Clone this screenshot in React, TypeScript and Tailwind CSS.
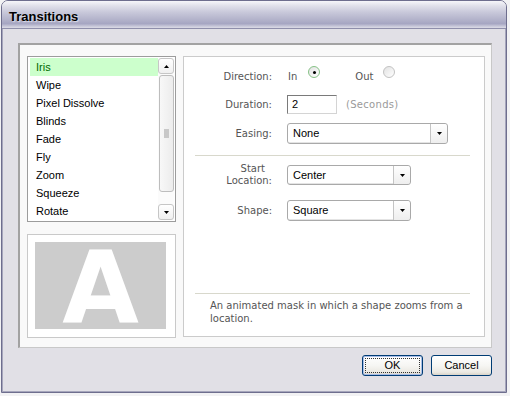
import React from 'react';

const items = ['Iris', 'Wipe', 'Pixel Dissolve', 'Blinds', 'Fade', 'Fly', 'Zoom', 'Squeeze', 'Rotate'];

function TriDown() {
  return (
    <svg width="5" height="3" viewBox="0 0 5 3">
      <path d="M0 0H5L2.5 3Z" fill="#000" />
    </svg>
  );
}
function TriUp() {
  return (
    <svg width="5" height="3" viewBox="0 0 5 3">
      <path d="M0 3H5L2.5 0Z" fill="#000" />
    </svg>
  );
}

function Select({ cls, value }: { cls: string; value: string }) {
  return (
    <div className={`flex rounded-[3px] border border-[#a9a9a9] bg-white shadow-[inset_-1px_-1px_0_#e4e4e4] ${cls}`}>
      <div className="flex flex-1 items-center pl-[5px] font-['Liberation_Sans',sans-serif] text-[11px] text-black">
        {value}
      </div>
      <div className="flex w-[17px] items-center justify-center rounded-r-[3px] border-l border-[#c4c4c4] bg-gradient-to-b from-white to-[#eeeeee]">
        <TriDown />
      </div>
    </div>
  );
}

function Radio({ checked }: { checked: boolean }) {
  return (
    <span
      className={`mb-[8px] flex h-[12px] w-[12px] items-center justify-center rounded-full border bg-gradient-to-br from-[#e2e2e2] to-white ${
        checked ? 'border-[#86c286]' : 'border-[#c2c2c2]'
      }`}
    >
      {checked && <span className="h-[3px] w-[3px] rounded-full bg-black" />}
    </span>
  );
}

export default function App() {
  const label = "font-['DejaVu_Sans',sans-serif] text-[10px] text-[#555555]";
  return (
    <div className="h-[396px] w-[510px] bg-[#f2f2f4] pl-[1px]">
      <div className="flex h-[393px] w-[506px] flex-col overflow-hidden rounded-t-[7px] border border-[#6e6e8e]">
        {/* Title bar */}
        <div className="flex h-[27px] items-center bg-[linear-gradient(to_bottom,#f6f6fa_0%,#e0e0ea_18%,#c8c8da_42%,#b2b2ca_70%,#a6a6c2_84%,#c6c6d8_93%,#dcdce6_100%)] pl-[7px] pt-[4px]">
          <span className="font-['Liberation_Sans',sans-serif] text-[13px] font-bold text-black [text-shadow:1px_1px_1px_rgba(255,255,255,0.6)]">
            Transitions
          </span>
        </div>
        {/* Body */}
        <div className="flex flex-1 flex-col border-t border-[#8f8fab] bg-[#e1e0e6] pl-[16px] pt-[14px] shadow-[inset_1px_0_0_#a6a6bc,inset_-1px_0_0_#a6a6bc,inset_0_-1px_0_#a6a6bc]">
          <div className="flex h-[305px] w-[474px] border-l-2 border-t-2 border-b border-r border-l-[#a2a2a2] border-t-[#a2a2a2] border-b-[#c8c8c8] border-r-[#c8c8c8] bg-[#f9f9f9] pl-[7px] pt-[11px]">
            {/* Left column */}
            <div className="flex w-[149px] flex-col">
              <div className="flex h-[166px] border border-[#9c9c9c] bg-white pl-[2px] pt-[1px]">
                <div className="flex w-[128px] flex-col">
                  {items.map((it, i) => (
                    <div
                      key={it}
                      className={`flex h-[18px] items-center pl-[6px] font-['Liberation_Sans',sans-serif] text-[11px] ${
                        i === 0 ? 'bg-[#ccffcc] text-[#006a00]' : 'text-black'
                      }`}
                    >
                      {it}
                    </div>
                  ))}
                </div>
                {/* Scrollbar */}
                <div className="flex h-[162px] w-[16px] flex-col bg-[#fbfbfb]">
                  <div className="flex h-[16px] w-[16px] items-center justify-center rounded-[3px] border border-[#c6c6c6] bg-gradient-to-b from-white to-[#f0f0f0]">
                    <TriUp />
                  </div>
                  <div className="ml-[1px] mt-[1px] flex h-[117px] w-[15px] items-center justify-center rounded-[3px] border border-[#bdbdbd] bg-gradient-to-r from-[#f8f8f8] to-[#ececec]">
                    <div className="h-[9px] w-[5px] bg-[#c8c8c8]" />
                  </div>
                  <div className="flex-1" />
                  <div className="flex h-[16px] w-[16px] items-center justify-center rounded-[3px] border border-[#c6c6c6] bg-gradient-to-b from-white to-[#f0f0f0]">
                    <TriDown />
                  </div>
                </div>
              </div>
              <div className="mt-[12px] h-[104px] border border-[#c9c9c9] bg-white pl-[7px] pt-[7px]">
                <div className="flex h-[87px] w-[131px] items-center justify-center bg-[#cccccc] pt-[3px]">
                  <span className="font-['DejaVu_Sans',sans-serif] text-[99px] font-bold leading-none text-white">A</span>
                </div>
              </div>
            </div>
            {/* Right box */}
            <div className="ml-[7px] flex h-[281px] w-[302px] flex-col border border-[#cbcbcb] bg-white">
              {/* Direction */}
              <div className="mt-[9px] flex h-[20px] items-center">
                <div className={`w-[88px] text-right ${label}`}>Direction:</div>
                <span className={`ml-[16px] ${label}`}>In</span>
                <span className="ml-[11px]">
                  <Radio checked />
                </span>
                <span className={`ml-[35px] ${label}`}>Out</span>
                <span className="ml-[10px]">
                  <Radio checked={false} />
                </span>
              </div>
              {/* Duration */}
              <div className="mt-[9px] flex h-[19px] items-center">
                <div className={`w-[88px] text-right ${label}`}>Duration:</div>
                <div className="ml-[15px] flex h-[19px] w-[50px] items-center border border-b-[#d4d4d4] border-l-[#7a7a7a] border-r-[#d4d4d4] border-t-[#7a7a7a] bg-white pl-[4px] font-['Liberation_Sans',sans-serif] text-[11px] text-black">
                  2
                </div>
                <span className="ml-[9px] font-['DejaVu_Sans',sans-serif] text-[10px] tracking-[0.3px] text-[#9a9a9a]">(Seconds)</span>
              </div>
              {/* Easing */}
              <div className="mt-[9px] flex h-[21px] items-center">
                <div className={`w-[88px] text-right ${label}`}>Easing:</div>
                <Select cls="ml-[15px] h-[21px] w-[161px]" value="None" />
              </div>
              <div className="ml-[11px] mt-[11px] h-px w-[275px] bg-[#d8d8cc]" />
              {/* Start Location */}
              <div className="mt-[9px] flex h-[20px] items-center">
                <div className={`flex w-[88px] flex-col items-end leading-[12px] ${label}`}>
                  <span className="pr-[7px]">Start</span>
                  <span>Location:</span>
                </div>
                <Select cls="ml-[15px] h-[20px] w-[124px]" value="Center" />
              </div>
              {/* Shape */}
              <div className="mt-[15px] flex h-[21px] items-center">
                <div className={`w-[88px] text-right ${label}`}>Shape:</div>
                <Select cls="ml-[15px] h-[21px] w-[124px]" value="Square" />
              </div>
              <div className="mt-auto pb-[11px]">
                <div className="ml-[11px] h-px w-[275px] bg-[#d8d8cc]" />
                <div className={`mt-[5px] pl-[26px] leading-[13px] ${label}`}>
                  An animated mask in which a shape zooms from a
                  <br />
                  location.
                </div>
              </div>
            </div>
          </div>
          {/* Buttons */}
          <div className="mt-[7px] flex w-[474px] justify-end gap-[8px]">
            <div className="flex h-[21px] w-[61px] items-center justify-center rounded-[3px] border border-[#003c74] bg-[linear-gradient(to_bottom,#ffffff_0%,#f6f6f3_50%,#ebe9e2_85%,#d8d3c8_100%)] p-[2px] shadow-[inset_0_0_0_1px_#a8bde8]">
              <div className="flex h-full w-full items-center justify-center border border-dotted border-[#333] font-['Liberation_Sans',sans-serif] text-[11px] text-black">
                OK
              </div>
            </div>
            <div className="flex h-[21px] w-[61px] items-center justify-center rounded-[3px] border border-[#003c74] bg-[linear-gradient(to_bottom,#ffffff_0%,#f6f6f3_50%,#ebe9e2_85%,#d8d3c8_100%)] font-['Liberation_Sans',sans-serif] text-[11px] text-black">
              Cancel
            </div>
          </div>
        </div>
      </div>
    </div>
  );
}
